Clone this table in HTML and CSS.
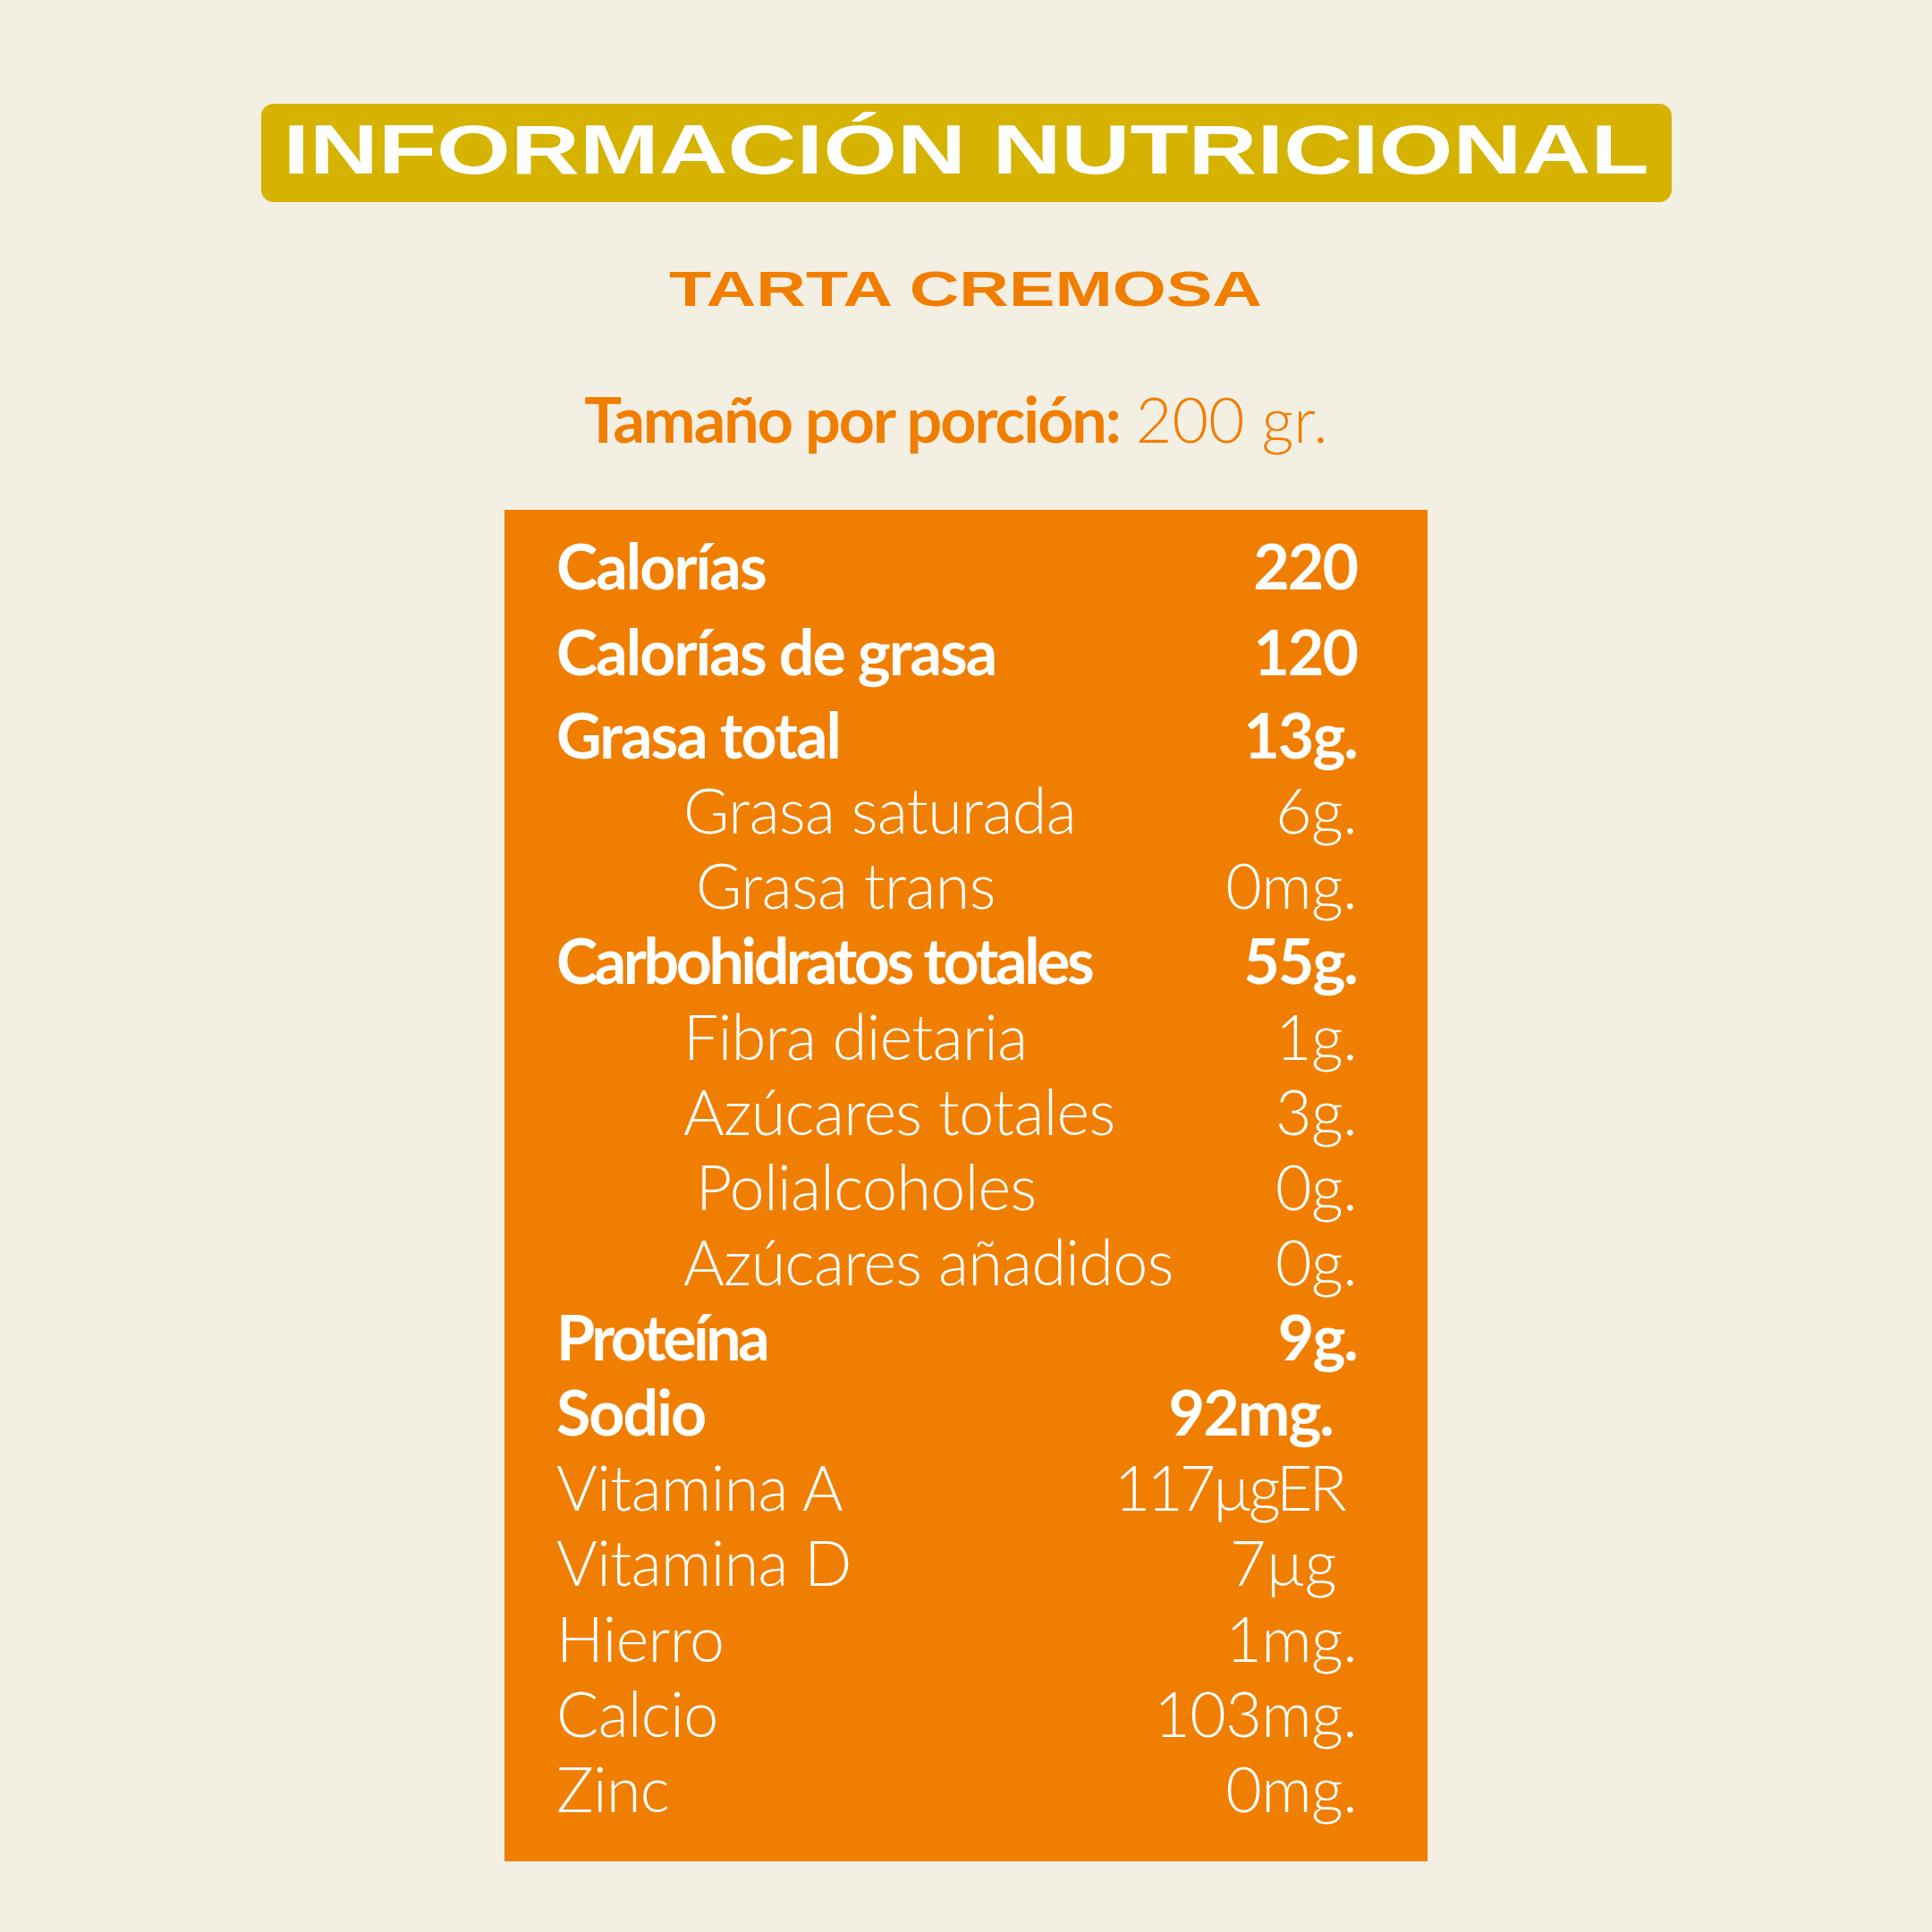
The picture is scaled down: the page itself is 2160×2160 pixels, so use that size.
FILE: index.html
```html
<!DOCTYPE html>
<html lang="es">
<head>
<meta charset="utf-8">
<title>Información nutricional</title>
<link rel="stylesheet" href="styles.css">
</head>
<body>
<main class="page">
  <header class="banner"><span class="banner-text">INFORMACIÓN NUTRICIONAL</span></header>
  <h2 class="subtitle"><span class="subtitle-text">TARTA CREMOSA</span></h2>
  <p class="serving"><b class="serving-label">Tamaño por porción:</b> <span class="serving-value">200 gr.</span></p>
  <section class="facts">
    <div class="row bold first"><span class="label">Calorías</span><span class="value">220</span></div>
    <div class="row bold second"><span class="label">Calorías de grasa</span><span class="value">120</span></div>
    <div class="row bold"><span class="label">Grasa total</span><span class="value">13g.</span></div>
    <div class="row light sub"><span class="label">Grasa saturada</span><span class="value">6g.</span></div>
    <div class="row light sub sub-deep"><span class="label">Grasa trans</span><span class="value">0mg.</span></div>
    <div class="row bold"><span class="label tight">Carbohidratos totales</span><span class="value">55g.</span></div>
    <div class="row light sub"><span class="label">Fibra dietaria</span><span class="value">1g.</span></div>
    <div class="row light sub"><span class="label">Azúcares totales</span><span class="value">3g.</span></div>
    <div class="row light sub sub-deep"><span class="label">Polialcoholes</span><span class="value">0g.</span></div>
    <div class="row light sub"><span class="label">Azúcares añadidos</span><span class="value">0g.</span></div>
    <div class="row bold"><span class="label tight">Proteína</span><span class="value">9g.</span></div>
    <div class="row bold"><span class="label">Sodio</span><span class="value shift-l">92mg.</span></div>
    <div class="row light"><span class="label">Vitamina A</span><span class="value shift-s narrow">117µgER</span></div>
    <div class="row light"><span class="label">Vitamina D</span><span class="value shift-m">7µg</span></div>
    <div class="row light"><span class="label">Hierro</span><span class="value">1mg.</span></div>
    <div class="row light"><span class="label">Calcio</span><span class="value">103mg.</span></div>
    <div class="row light"><span class="label">Zinc</span><span class="value">0mg.</span></div>
  </section>
</main>
</body>
</html>
```

FILE: styles.css
```css
html, body {
  margin: 0;
  padding: 0;
}

body {
  background: #f3efe3;
  width: 2160px;
  height: 2160px;
  overflow: hidden;
}

.page {
  display: flex;
  flex-direction: column;
  align-items: center;
}

.banner {
  box-sizing: border-box;
  margin-top: 116px;
  width: 1577px;
  height: 110px;
  padding-top: 12px;
  background: #d5b300;
  border-radius: 14px;
  display: flex;
  justify-content: center;
  align-items: flex-start;
}

.banner-text {
  display: inline-block;
  font-family: "Liberation Sans", Arial, sans-serif;
  font-weight: 700;
  font-size: 78px;
  line-height: 78px;
  color: #ffffff;
  white-space: nowrap;
  transform: scaleX(1.366);
}

.subtitle {
  margin: 69px 0 0;
  font-family: "Liberation Sans", Arial, sans-serif;
  font-weight: 700;
  font-size: 56px;
  line-height: 56px;
  color: #f07e00;
}

.subtitle-text {
  display: inline-block;
  white-space: nowrap;
  transform: scaleX(1.378);
}

.serving {
  margin: 75px 0 0;
  padding-right: 22px;
  font-family: Lato, "Open Sans", sans-serif;
  font-size: 70px;
  line-height: 84px;
  color: #f07e00;
  white-space: nowrap;
}

.serving-label {
  font-weight: 700;
  letter-spacing: -2px;
}

.serving-value {
  font-weight: 300;
}

.facts {
  box-sizing: border-box;
  margin-top: 60px;
  width: 1032px;
  height: 1511px;
  padding: 20px 79px 40px 58px;
  background: #f07e00;
  color: #ffffff;
  font-family: Lato, "Open Sans", sans-serif;
  font-size: 70px;
}

.row {
  display: grid;
  grid-template-columns: 1fr auto;
  line-height: 84.14px;
  height: 84.14px;
  white-space: nowrap;
}

.row.first {
  height: 96px;
}

.row.second {
  height: 93px;
}

.bold {
  font-weight: 700;
  letter-spacing: -2px;
}

.bold .tight {
  letter-spacing: -3.5px;
}

.light {
  font-weight: 300;
  letter-spacing: -0.6px;
}

.sub .label {
  padding-left: 142px;
}

.sub-deep .label {
  padding-left: 156px;
}

.value {
  text-align: right;
}

.narrow {
  letter-spacing: -4px;
}

.shift-s {
  margin-right: 15px;
}

.shift-m {
  margin-right: 23px;
}

.shift-l {
  margin-right: 27px;
}
```
